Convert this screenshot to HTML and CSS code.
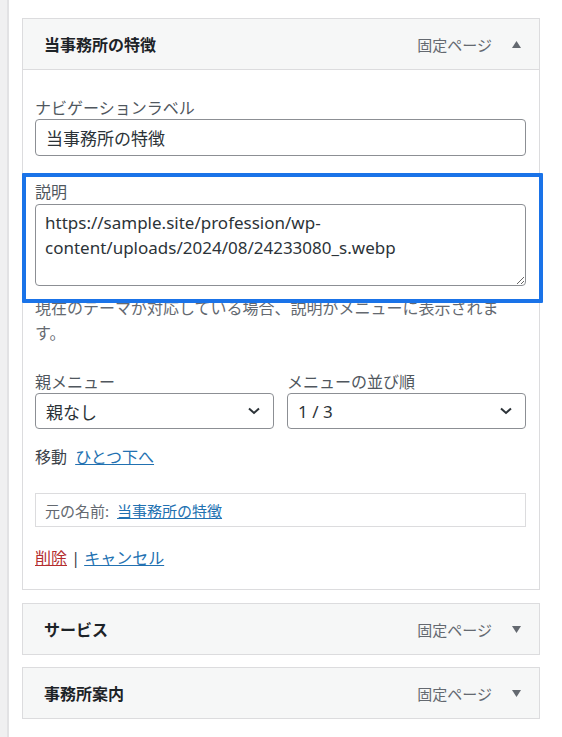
FILE: index.html
```html
<!doctype html>
<html lang="ja">

<head>
	<meta charset="utf-8">
	<meta name="viewport" content="width=device-width, initial-scale=1">
	<title>メニュー項目</title>
	<link rel="stylesheet" href="styles.css">
</head>

<body>

	<div class="screen">

		<div class="rail"></div>

		<div class="menu">

			<div class="item open">

				<div class="item-bar">
					<span class="item-title">当事務所の特徴</span>
					<span class="item-type">固定ページ</span>
					<svg class="toggle" width="9" height="7" viewBox="0 0 9 7"><path d="M4.5 0 9 7H0z" /></svg>
				</div>

				<div class="item-settings">

					<div class="field">
						<label>ナビゲーションラベル</label>
						<input class="text-input" type="text" value="当事務所の特徴">
					</div>

					<div class="field field-desc">
						<label>説明</label>
						<textarea class="desc-input">https://sample.site/profession/wp-content/uploads/2024/08/24233080_s.webp</textarea>
						<span class="highlight"></span>
					</div>

					<p class="description">現在のテーマが対応している場合、説明がメニューに表示されます。</p>

					<div class="two-col">
						<div class="field">
							<label>親メニュー</label>
							<div class="select"><span>親なし</span>
								<svg width="12" height="8" viewBox="0 0 12 8"><path d="M1 1.5 6 6l5-4.5" /></svg></div>
						</div>
						<div class="field">
							<label>メニューの並び順</label>
							<div class="select"><span>1 / 3</span>
								<svg width="12" height="8" viewBox="0 0 12 8"><path d="M1 1.5 6 6l5-4.5" /></svg></div>
						</div>
					</div>

					<p class="move">移動 <a href="#">ひとつ下へ</a></p>

					<div class="original">元の名前: <a href="#">当事務所の特徴</a></div>

					<p class="actions"><a class="delete" href="#">削除</a> | <a href="#">キャンセル</a></p>

				</div>

			</div>

			<div class="item">
				<div class="item-bar">
					<span class="item-title">サービス</span>
					<span class="item-type">固定ページ</span>
					<svg class="toggle" width="9" height="7" viewBox="0 0 9 7"><path d="M0 0h9L4.5 7z" /></svg>
				</div>
			</div>

			<div class="item">
				<div class="item-bar">
					<span class="item-title">事務所案内</span>
					<span class="item-type">固定ページ</span>
					<svg class="toggle" width="9" height="7" viewBox="0 0 9 7"><path d="M0 0h9L4.5 7z" /></svg>
				</div>
			</div>

		</div>

	</div>

</body>

</html>
```

FILE: styles.css
```css
* {
	box-sizing: border-box;
}

body {
	margin: 0;
	background-color: #fff;
	color: #3c434a;
	font: 16px "Noto Sans", "Noto Sans CJK JP", sans-serif;
}

a {
	color: #2271b1;
	text-decoration: underline;
}

p {
	margin: 0;
}

.screen {
	display: flex;
	min-height: 100vh;
}

.rail {
	width: 9px;
	background-color: #f0f0f1;
	border-right: 2px solid #e2e2e4;
}

.menu {
	flex: 1;
	padding: 18px 22px 0 13px;
}

.item {
	border: 1px solid #dcdcde;
	margin-bottom: 12px;
}

.item.open {
	margin-bottom: 13px;
}

.item-bar {
	display: flex;
	align-items: center;
	height: 50px;
	padding: 0 18px 0 21px;
	background-color: #f6f7f7;
}

.open .item-bar {
	border-bottom: 1px solid #dcdcde;
	height: 51px;
}

.item-title {
	flex: 1;
	color: #1d2327;
	font-weight: 700;
	font-size: 16px;
}

.item-type {
	color: #646970;
	font-size: 15px;
	margin-right: 20px;
}

.toggle {
	fill: #646970;
}

.item-settings {
	padding: 28px 13px 21px 12px;
}

.field {
	display: flex;
	flex-direction: column;
}

.field label {
	color: #50575e;
	font-size: 16px;
	line-height: 20px;
	margin-bottom: 1px;
}

.text-input {
	height: 37px;
	border: 1px solid #8c8f94;
	border-radius: 4px;
	padding: 0 10px;
	color: #2c3338;
	font: 17px "Noto Sans", "Noto Sans CJK JP", sans-serif;
}

.field-desc {
	position: relative;
	margin-top: 26px;
}

.field-desc label {
	margin-bottom: 2px;
}

.desc-input {
	height: 82px;
	border: 1px solid #8c8f94;
	border-radius: 4px;
	padding: 5px 9px;
	color: #2c3338;
	font: 17px/25px "Noto Sans", "Noto Sans CJK JP", sans-serif;
	resize: vertical;
}

.highlight {
	position: absolute;
	top: -9px;
	left: -13px;
	right: -17px;
	bottom: -17px;
	border: 4px solid #1a73e8;
	border-radius: 1px;
}

.description {
	margin-top: 10px;
	color: #646970;
	font-size: 16px;
	line-height: 25px;
}

.two-col {
	display: grid;
	grid-template-columns: 1fr 1fr;
	gap: 13px;
	margin-top: 26px;
}

.select {
	display: flex;
	align-items: center;
	justify-content: space-between;
	height: 36px;
	border: 1px solid #8c8f94;
	border-radius: 4px;
	padding: 0 13px 0 10px;
	color: #2c3338;
	font-size: 17px;
}

.select svg {
	fill: none;
	stroke: #2c3338;
	stroke-width: 2;
}

.move {
	margin-top: 18px;
	font-size: 16px;
	line-height: 20px;
}

.move a {
	margin-left: 4px;
}

.original {
	display: flex;
	align-items: center;
	height: 34px;
	margin-top: 26px;
	padding: 0 9px;
	border: 1px solid #dcdcde;
	color: #646970;
	font-size: 15px;
	gap: 8px;
}

.actions {
	margin-top: 21px;
	font-size: 16px;
	line-height: 20px;
}

.delete {
	color: #b32d2e;
}
```
